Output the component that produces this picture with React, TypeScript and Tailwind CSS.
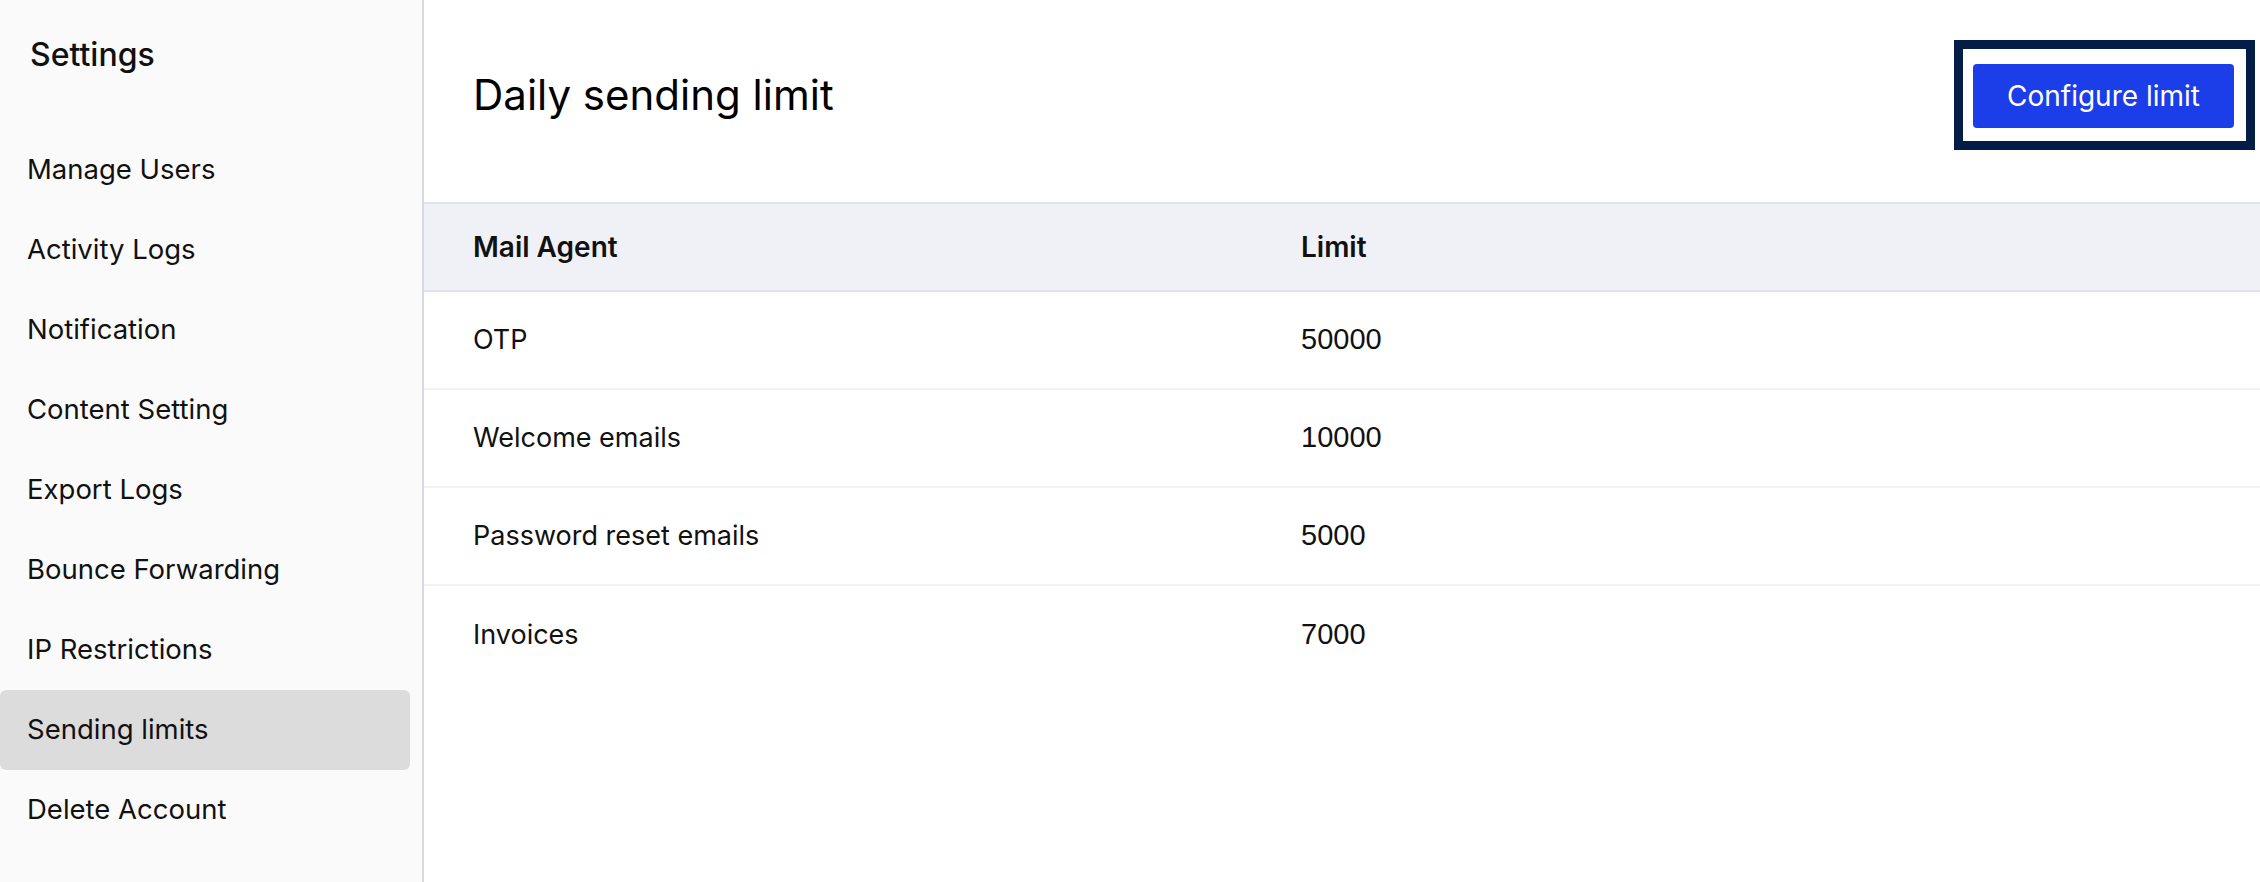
import React from 'react';

const navItems = [
  'Manage Users',
  'Activity Logs',
  'Notification',
  'Content Setting',
  'Export Logs',
  'Bounce Forwarding',
  'IP Restrictions',
  'Sending limits',
  'Delete Account',
];

const rows = [
  { agent: 'OTP', limit: '50000' },
  { agent: 'Welcome emails', limit: '10000' },
  { agent: 'Password reset emails', limit: '5000' },
  { agent: 'Invoices', limit: '7000' },
];

const Sidebar: React.FC<{ active: string }> = ({ active }) => (
  <aside className="w-[424px] shrink-0 h-screen bg-[#fafafa] border-r-2 border-[#d6d9de] flex flex-col">
    <div className="h-[130px] pl-[30px] pt-[34px]">
      <h1 className="text-[32px] leading-[42px] font-medium text-[#111]">Settings</h1>
    </div>
    <nav className="flex flex-col pr-[12px]">
      {navItems.map((item) => (
        <div
          key={item}
          className={`h-[80px] flex items-center pl-[27px] rounded-[6px] text-[27.5px] text-[#111] ${
            item === active ? 'bg-[#dcdcdc]' : ''
          }`}
        >
          {item}
        </div>
      ))}
    </nav>
  </aside>
);

export default function App() {
  return (
    <div className="flex h-screen w-full bg-white font-['Inter',sans-serif] text-[#111]">
      <Sidebar active="Sending limits" />

      <main className="flex-1 flex flex-col min-w-0">
        {/* Header */}
        <div className="h-[202px] pb-[12px] pl-[49px] pr-[5px] flex items-center justify-between">
          <h2 className="text-[42px] leading-none text-black">Daily sending limit</h2>
          <div className="border-[9px] border-[#041d46] pl-[10px] pr-[12px] pt-[15px] pb-[13px]">
            <button className="w-[261px] h-[64px] rounded-[4px] bg-[#1b3ee9] text-white text-[28px]">
              Configure limit
            </button>
          </div>
        </div>

        {/* Table */}
        <div className="flex h-[90px] items-center bg-[#f0f1f6] border-y-2 border-[#e1e3e8] pl-[49px] text-[28px] font-semibold">
          <div className="w-[828px]">Mail Agent</div>
          <div>Limit</div>
        </div>
        {rows.map((row, i) => (
          <div
            key={row.agent}
            className={`flex h-[98px] items-center pl-[49px] text-[27px] ${
              i < rows.length - 1 ? 'border-b-2 border-[#f2f2f4]' : ''
            }`}
          >
            <div className="w-[828px]">{row.agent}</div>
            <div className="[font-family:'Liberation_Sans',Arial,sans-serif] text-[29px]">{row.limit}</div>
          </div>
        ))}
      </main>
    </div>
  );
}
